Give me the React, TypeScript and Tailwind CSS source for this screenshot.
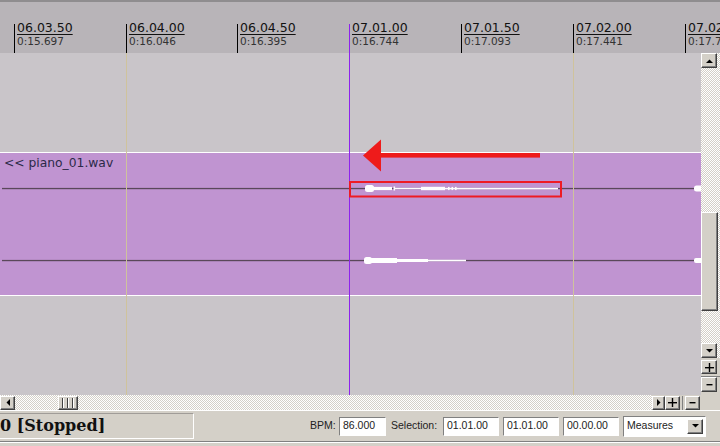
import React from "react";

const checker =
  "bg-[#d4d0c8] bg-[image:repeating-conic-gradient(#d4d0c8_0%_25%,#ffffff_0%_50%)] bg-[length:2px_2px]";
const raised =
  "bg-[#d4d0c8] border border-t-white border-l-white border-r-[#404040] border-b-[#404040] shadow-[inset_-1px_-1px_0_#808080]";
const sunken =
  "bg-white border border-t-[#808080] border-l-[#808080] border-r-white border-b-white";

const ticks = [
  { w: "w-[112px]", a: "06.03.50", b: "0:15.697" },
  { w: "w-[111px]", a: "06.04.00", b: "0:16.046" },
  { w: "w-[112px]", a: "06.04.50", b: "0:16.395" },
  { w: "w-[112px]", a: "07.01.00", b: "0:16.744" },
  { w: "w-[112px]", a: "07.01.50", b: "0:17.093" },
  { w: "w-[112px]", a: "07.02.00", b: "0:17.441" },
  { w: "w-[112px]", a: "07.02.50", b: "0:17.790" },
];

function Tri({ dir }: { dir: "up" | "down" | "left" | "right" }) {
  const pts =
    dir === "up"
      ? "0,4 7,4 3.5,0.5"
      : dir === "down"
      ? "0,0 7,0 3.5,3.5"
      : dir === "left"
      ? "4,0 4,7 0.5,3.5"
      : "0,0 0,7 3.5,3.5";
  const w = dir === "up" || dir === "down" ? 7 : 4;
  const h = dir === "up" || dir === "down" ? 4 : 7;
  return (
    <svg width={w} height={h} viewBox={`0 0 ${w} ${h}`}>
      <polygon points={pts} fill="#000" />
    </svg>
  );
}

function Plus() {
  return (
    <svg width="9" height="9" viewBox="0 0 9 9">
      <rect x="0" y="4" width="9" height="1.4" fill="#000" />
      <rect x="3.8" y="0" width="1.4" height="9" fill="#000" />
    </svg>
  );
}

function Minus() {
  return (
    <svg width="7" height="9" viewBox="0 0 7 9">
      <rect x="0.5" y="4" width="6" height="1.4" fill="#000" />
    </svg>
  );
}

export default function App() {
  const c1 = 36.5;
  const c2 = 108.5;
  return (
    <div className="relative w-[720px] h-[446px] overflow-hidden flex flex-col bg-[#c9c5c9] font-['DejaVu_Sans',sans-serif]">
      {/* top edge */}
      <div className="h-[2px] bg-[#8f8d8f] shrink-0" />

      {/* ruler */}
      <div className="h-[51px] shrink-0 bg-[#b8b4b8] flex pl-[14px] overflow-hidden">
        {ticks.map((t) => (
          <div key={t.a} className={`${t.w} shrink-0 flex`}>
            <div className="mt-[22px] w-px bg-black" />
            <div className="ml-[2px] pt-[19px] whitespace-nowrap">
              <div className="text-[12.5px] leading-[14px] text-[#111] underline underline-offset-[2px]">
                {t.a}
              </div>
              <div className="text-[10.5px] leading-[12px] text-[#333]">{t.b}</div>
            </div>
          </div>
        ))}
      </div>

      {/* body */}
      <div className="h-[342px] shrink-0 flex">
        {/* canvas */}
        <div className="relative w-[701px] shrink-0 bg-[#c9c5c9] flex flex-col overflow-hidden">
          <div className="h-[99px] shrink-0" />
          <div className="relative h-[144px] shrink-0 bg-[#c094d1] border-y border-white">
            <div className="pl-[4px] pt-[3px] text-[12.3px] leading-[14px] text-[#2b2a48] whitespace-nowrap">
              &lt;&lt; piano_01.wav
            </div>
            <svg
              className="absolute left-0 top-[-1px]"
              width="701"
              height="144"
              viewBox="0 0 701 144"
            >
              <rect x="2" y={c1 - 0.6} width="699" height="1.3" fill="#5a485a" />
              <rect x="2" y={c2 - 0.6} width="699" height="1.3" fill="#5a485a" />
              {/* waveform 1 */}
              <g fill="#fff">
                <rect x="365" y={c1 - 3.5} width="9" height="7" rx="2.5" />
                <rect x="373" y={c1 - 1.6} width="19" height="3.2" />
                <rect x="393.5" y={c1 - 2} width="1.6" height="4" />
                <rect x="395" y={c1 - 0.7} width="26" height="1.4" />
                <rect x="421" y={c1 - 1.7} width="24" height="3.4" />
                <rect x="445" y={c1 - 0.7} width="113" height="1.6" />
                <rect x="448" y={c1 - 1.6} width="1.6" height="3.2" />
                <rect x="451.5" y={c1 - 1.6} width="1.6" height="3.2" />
                <rect x="455" y={c1 - 1.6} width="1.6" height="3.2" />
                <rect x="694" y={c1 - 3} width="9" height="6" rx="2.5" />
              </g>
              {/* waveform 2 */}
              <g fill="#fff">
                <rect x="364" y={c2 - 3.5} width="8" height="7" rx="2.5" />
                <rect x="371" y={c2 - 2.5} width="26" height="5" />
                <rect x="397" y={c2 - 1.5} width="31" height="3" />
                <rect x="428" y={c2 - 0.8} width="38" height="1.6" />
                <rect x="694" y={c2 - 2.5} width="9" height="5" rx="2" />
              </g>
            </svg>
          </div>
          <div className="flex-1" />
          {/* overlays */}
          <svg
            className="absolute left-0 top-0 pointer-events-none"
            width="701"
            height="342"
            viewBox="0 0 701 342"
          >
            <rect x="126" y="0" width="1" height="342" fill="#cfc39c" />
            <rect x="573" y="0" width="1" height="342" fill="#cfc39c" />
            <rect x="349" y="0" width="1" height="342" fill="#8e22ee" />
            <rect
              x="350"
              y="129"
              width="211"
              height="14.5"
              fill="none"
              stroke="#ee1b24"
              strokeWidth="2"
            />
            <polygon points="363,102.5 381,86.5 381,118.5" fill="#ee1b1b" />
            <rect x="380" y="100" width="160" height="4.6" fill="#ee1b1b" />
          </svg>
        </div>

        {/* vertical scrollbar */}
        <div className="w-[19px] shrink-0 flex flex-col bg-[#d4d0c8]">
          <div className={`h-[305px] flex flex-col ${checker}`}>
            <div className={`h-[15px] w-[16px] flex items-center justify-center ${raised}`}>
              <Tri dir="up" />
            </div>
            <div className="h-[144px]" />
            <div className={`h-[99px] w-[17px] ${raised}`} />
            <div className="flex-1" />
            <div className={`h-[15px] w-[16px] flex items-center justify-center ${raised}`}>
              <Tri dir="down" />
            </div>
          </div>
          <div className="h-[2px]" />
          <div className={`h-[14px] w-[16px] flex items-center justify-center ${raised}`}>
            <Plus />
          </div>
          <div className="h-[3px] border-b border-[#808080]" />
          <div className={`h-[15px] w-[16px] flex items-center justify-center ${raised}`}>
            <Minus />
          </div>
        </div>
      </div>

      {/* horizontal scrollbar */}
      <div className="h-[15px] shrink-0 flex items-center bg-[#d4d0c8]">
        <div className={`w-[652px] h-full flex items-center ${checker}`}>
          <div className={`w-[15px] h-[14px] flex items-center justify-center ${raised}`}>
            <Tri dir="left" />
          </div>
          <div className="w-[43px]" />
          <div className={`w-[20px] h-[14px] flex items-center justify-center gap-[3px] ${raised}`}>
            <div className="w-[2px] h-[10px] border-l border-[#404040] border-r border-r-white" />
            <div className="w-[2px] h-[10px] border-l border-[#404040] border-r border-r-white" />
            <div className="w-[2px] h-[10px] border-l border-[#404040] border-r border-r-white" />
          </div>
        </div>
        <div className={`w-[13px] h-[14px] flex items-center justify-center ${raised}`}>
          <Tri dir="right" />
        </div>
        <div className={`w-[15px] h-[14px] flex items-center justify-center ${raised}`}>
          <Plus />
        </div>
        <div className="w-[5px] h-[14px] flex justify-center">
          <div className="w-px h-full bg-[#808080]" />
        </div>
        <div className={`w-[15px] h-[14px] flex items-center justify-center ${raised}`}>
          <Minus />
        </div>
      </div>

      {/* status bar */}
      <div className="h-[36px] shrink-0 bg-[#d4d0c8] border-t border-white flex flex-col">
        <div className="h-[30px] flex items-center text-[10.5px] text-[#222] font-['Liberation_Sans',Arial,sans-serif]">
          <div className="w-[194px] h-[26px] shrink-0 border-t border-t-[#a09c98] border-r border-r-white border-b border-b-white flex items-center font-['DejaVu_Serif',serif] font-bold text-[16px] text-[#111] whitespace-nowrap">
            0 [Stopped]
          </div>
          <div className="ml-[116px] w-[29px] shrink-0">BPM:</div>
          <div className={`w-[47px] h-[19px] shrink-0 flex items-center pl-[3px] ${sunken}`}>86.000</div>
          <div className="w-[57px] shrink-0 pl-[5px] whitespace-nowrap">Selection:</div>
          <div className={`w-[56px] h-[19px] shrink-0 flex items-center pl-[3px] ${sunken}`}>01.01.00</div>
          <div className={`ml-[4px] w-[56px] h-[19px] shrink-0 flex items-center pl-[3px] ${sunken}`}>01.01.00</div>
          <div className={`ml-[4px] w-[56px] h-[19px] shrink-0 flex items-center pl-[3px] ${sunken}`}>00.00.00</div>
          <div className={`ml-[4px] w-[83px] h-[21px] shrink-0 flex items-center justify-between pl-[3px] pr-[2px] ${sunken}`}>
            <span>Measures</span>
            <div className={`w-[16px] h-[15px] flex items-center justify-center ${raised}`}>
              <Tri dir="down" />
            </div>
          </div>
        </div>
        <div className="h-[2px] border-t border-t-[#808080] border-b border-b-white" />
      </div>

      {/* playhead across the ruler */}
      <div className="absolute z-10 left-[349px] top-[24px] h-[29px] w-0 border-l border-[#8e22ee]" />
    </div>
  );
}
